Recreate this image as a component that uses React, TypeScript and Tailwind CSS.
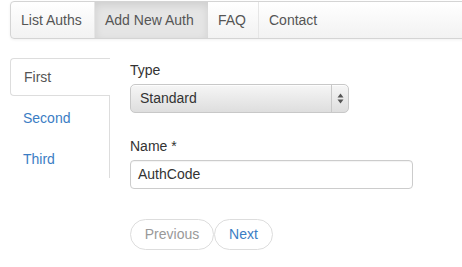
const navItems = [
  { label: 'List Auths', w: 84 },
  { label: 'Add New Auth', w: 113 },
  { label: 'FAQ', w: 51 },
  { label: 'Contact', w: 72 },
]

export default function App() {
  return (
    <div className="w-[462px] h-[267px] overflow-hidden bg-white text-[14px] text-[#333] font-['Liberation_Sans',Arial,sans-serif]">
      {/* top nav */}
      <div className="ml-[10px] mt-[1px] w-[480px] h-[38px] flex rounded-l-[4px] border border-[#d4d4d4] bg-gradient-to-b from-white to-[#f2f2f2] shadow-[0_1px_3px_rgba(0,0,0,0.06)]">
        {navItems.map((item, i) => (
          <div
            key={item.label}
            className={
              i === 1
                ? 'h-full flex items-center px-[10px] text-[#555] bg-[#e5e5e5] shadow-[inset_0_3px_8px_rgba(0,0,0,0.1)]'
                : 'h-full flex items-center px-[10px] text-[#555] border-r border-[#e6e6e6] last:border-r-0'
            }
            style={{ width: item.w }}
          >
            {item.label}
          </div>
        ))}
      </div>

      <div className="flex mt-[19px] ml-[10px]">
        {/* side tabs */}
        <div className="w-[100px] flex flex-col">
          <div className="h-[38px] flex items-center pl-[13px] border border-r-0 border-[#ddd] rounded-l-[4px] text-[#555] bg-white">
            First
          </div>
          <div className="border-r border-[#ddd] h-[82px] flex flex-col">
            <div className="h-[44px] flex items-center pl-[13px] text-[#3b7dc4]">Second</div>
            <div className="h-[38px] flex items-center pl-[13px] text-[#3b7dc4]">Third</div>
          </div>
        </div>

        {/* form */}
        <div className="ml-[20px] flex flex-col">
          <div className="h-[22px] mt-[1px] flex items-center">Type</div>
          <div className="mt-[3px] w-[219px] h-[29px] flex rounded-[5px] border border-[#c8c8c8] bg-gradient-to-b from-[#f6f6f6] to-[#dedede] shadow-[inset_0_1px_0_rgba(255,255,255,0.8)]">
            <div className="flex-1 flex items-center pl-[9px] text-[#333]">Standard</div>
            <div className="w-[17px] border-l border-[#c8c8c8] flex items-center justify-center">
              <svg width="7" height="11" viewBox="0 0 7 11">
                <path d="M3.5 0.5 L6.5 4.5 L0.5 4.5 Z" fill="#555" />
                <path d="M3.5 10.5 L6.5 6.5 L0.5 6.5 Z" fill="#555" />
              </svg>
            </div>
          </div>
          <div className="mt-[22px] h-[22px] flex items-center">Name *</div>
          <div className="mt-[3px] w-[283px] h-[29px] flex items-center pl-[7px] rounded-[4px] border border-[#ccc] bg-white shadow-[inset_0_1px_1px_rgba(0,0,0,0.05)]">
            AuthCode
          </div>
          <div className="mt-[30px] flex">
            <div className="w-[84px] h-[31px] flex items-center justify-center rounded-full border border-[#ddd] text-[#999]">
              Previous
            </div>
            <div className="w-[59px] h-[31px] flex items-center justify-center rounded-full border border-[#ddd] text-[#3b7dc4]">
              Next
            </div>
          </div>
        </div>
      </div>
    </div>
  )
}
